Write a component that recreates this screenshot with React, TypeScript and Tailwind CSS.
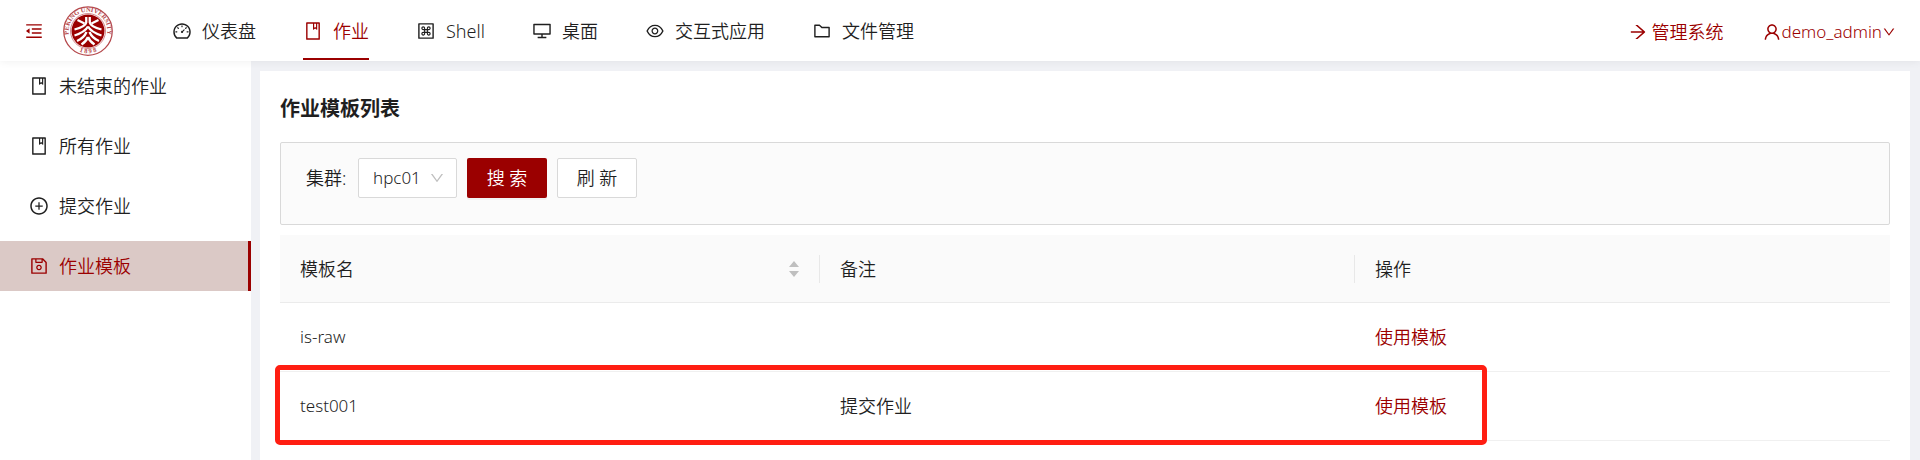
import type { ReactNode } from "react";
import type { IconType } from "react-icons";
import {
  AiOutlineArrowRight,
  AiOutlineBook,
  AiOutlineDashboard,
  AiOutlineDesktop,
  AiOutlineDown,
  AiOutlineEye,
  AiOutlineFolder,
  AiOutlineMacCommand,
  AiOutlineMenuFold,
  AiOutlinePlusCircle,
  AiOutlineSave,
  AiOutlineUser,
} from "react-icons/ai";

type Item = { label: string; icon: IconType; active?: boolean };

const navItems: Item[] = [
  { label: "仪表盘", icon: AiOutlineDashboard },
  { label: "作业", icon: AiOutlineBook, active: true },
  { label: "Shell", icon: AiOutlineMacCommand },
  { label: "桌面", icon: AiOutlineDesktop },
  { label: "交互式应用", icon: AiOutlineEye },
  { label: "文件管理", icon: AiOutlineFolder },
];

const sideItems: Item[] = [
  { label: "未结束的作业", icon: AiOutlineBook },
  { label: "所有作业", icon: AiOutlineBook },
  { label: "提交作业", icon: AiOutlinePlusCircle },
  { label: "作业模板", icon: AiOutlineSave, active: true },
];

const templates = [
  { name: "is-raw", comment: "" },
  { name: "test001", comment: "提交作业" },
];

function Logo() {
  return (
    <svg viewBox="0 0 100 100" className="size-[50px]" role="img" aria-label="Peking University">
      <defs>
        <path id="ring-top" d="M 20.400 75.800 A 39 39 0 1 1 79.600 75.800" />
        <path id="ring-bottom" d="M 20 83 A 45 45 0 0 0 80 83" />
      </defs>
      <circle cx="50" cy="50" r="48.5" fill="#fff" stroke="#b5484c" strokeWidth="2.5" />
      <g fill="#b5484c" fontFamily="Liberation Serif, serif" fontWeight="700">
        <text textAnchor="middle" fontSize="13">
          <textPath href="#ring-top" startOffset="50%">PEKING UNIVERSITY</textPath>
        </text>
        <text textAnchor="middle" fontSize="13">
          <textPath href="#ring-bottom" startOffset="50%">1 8 9 8</textPath>
        </text>
      </g>
      <circle cx="50" cy="50" r="35" fill="#fff" stroke="#c4666a" strokeWidth="1.5" />
      <circle cx="50" cy="50" r="33" fill="#9b0000" />
      <g fill="none" stroke="#fff" strokeWidth="4.6">
        <path d="M46.500 22 V33 Q45 41 23 47" />
        <path d="M53.500 22 V33 Q55 41 77 47" />
        <path d="M29 28 L43 35" />
        <path d="M71 28 L57 35" />
        <path d="M50 41 Q44 52 23 59" />
        <path d="M50 41 Q56 52 77 59" />
        <path d="M47 52 Q42 64 28 70 M53 52 Q58 64 72 70" />
        <path d="M50 62 Q47 70 37 77 M50 62 Q53 70 63 77" />
      </g>
    </svg>
  );
}

function HeadCell({ children, divider }: { children: ReactNode; divider?: boolean }) {
  return (
    <div className="flex h-[67px] items-center">
      <div className="flex flex-1 items-center justify-between px-5">{children}</div>
      {divider && <span className="h-7 w-px bg-[#e8e8e8]" />}
    </div>
  );
}

export default function App() {
  return (
    <div className="flex min-h-screen flex-col bg-[#f0f1f5] font-['Noto_Sans','Noto_Sans_CJK_SC',sans-serif] text-[18px] leading-7 font-[350] text-[#1f1f1f]">
      <header className="z-10 flex h-[61px] items-center bg-white px-6 shadow-[0_1px_8px_rgba(0,0,0,0.06)]">
        <button type="button" aria-label="收起菜单" className="mr-[19px] text-[#9b0000]">
          <AiOutlineMenuFold className="size-5" />
        </button>
        <Logo />
        <nav className="ml-[59px] flex gap-[47px] self-stretch">
          {navItems.map(({ label, icon: Icon, active }) => (
            <a
              key={label}
              href="#"
              className={
                active
                  ? "mb-px flex items-center gap-2.5 border-b-2 border-[#9b0000] pt-1 text-[#9b0000]"
                  : "mb-px flex items-center gap-2.5 border-b-2 border-transparent pt-1"
              }
            >
              <Icon className="size-5" />
              {label}
            </a>
          ))}
        </nav>
        <div className="ml-auto flex items-center gap-[38px] pt-0.5 text-[#9b0000]">
          <a href="#" className="flex items-center gap-1">
            <AiOutlineArrowRight className="size-5" />
            管理系统
          </a>
          <button type="button" className="flex items-center text-[17px]">
            <AiOutlineUser className="size-5" />
            demo_admin
            <AiOutlineDown className="size-3.5" />
          </button>
        </div>
      </header>

      <div className="flex flex-1">
        <aside className="flex w-[251px] shrink-0 flex-col gap-2.5 bg-white">
          {sideItems.map(({ label, icon: Icon, active }) => (
            <a
              key={label}
              href="#"
              className={
                active
                  ? "flex h-[50px] items-center gap-2.5 border-r-3 border-[#9b0000] bg-[#dbc9c6] pl-[29px] text-[#9b0000]"
                  : "flex h-[50px] items-center gap-2.5 pl-[29px]"
              }
            >
              <Icon className="size-5" />
              {label}
            </a>
          ))}
        </aside>

        <main className="mr-2.5 mt-2.5 ml-[9px] min-w-0 flex-1 bg-white px-5 pt-[23px]">
          <h1 className="text-[20px] leading-[30px] font-bold">作业模板列表</h1>

          <form
            className="mt-[18px] flex h-[83px] items-start gap-2.5 rounded-xs border border-[#d9d9d9] bg-[#fbfbfb] pt-[15px] pl-[25px]"
            onSubmit={(e) => e.preventDefault()}
          >
            <div className="flex items-center gap-2">
              <label htmlFor="cluster" className="w-11 whitespace-nowrap">
                集群:
              </label>
              <div className="relative">
                <select
                  id="cluster"
                  className="h-10 w-[99px] appearance-none rounded-xs border border-[#d9d9d9] bg-white pl-3.5 text-[17px]"
                >
                  <option>hpc01</option>
                </select>
                <AiOutlineDown className="pointer-events-none absolute top-3 right-3 size-4 text-[#bfbfbf]" />
              </div>
            </div>
            <button
              type="submit"
              className="h-10 w-20 rounded-xs bg-[#9b0000] text-white shadow-[0_2px_0_rgba(0,0,0,0.04)]"
            >
              搜 索
            </button>
            <button type="button" className="h-10 w-20 rounded-xs border border-[#d9d9d9] bg-white">
              刷 新
            </button>
          </form>

          <div className="relative mt-2.5">
            <table className="w-full table-fixed border-collapse text-left">
              <thead>
                <tr className="border-b border-[#ebebeb] bg-[#fafafa]">
                  <th className="w-[540px] p-0 font-[350]">
                    <HeadCell divider>
                      模板名
                      <svg viewBox="0 0 10 16" className="h-4 w-2.5" fill="#bfbfbf" aria-hidden="true">
                        <path d="M5 0 L10 6 H0 Z M0 10 H10 L5 16 Z" />
                      </svg>
                    </HeadCell>
                  </th>
                  <th className="p-0 font-[350]">
                    <HeadCell divider>备注</HeadCell>
                  </th>
                  <th className="p-0 font-[350]">
                    <HeadCell>操作</HeadCell>
                  </th>
                </tr>
              </thead>
              <tbody>
                {templates.map((t) => (
                  <tr key={t.name} className="h-[69px] border-b border-[#f0f0f0]">
                    <td className="px-5 text-[17px]">{t.name}</td>
                    <td className="px-5">{t.comment}</td>
                    <td className="px-5">
                      <a href="#" className="text-[#9b0000]">
                        使用模板
                      </a>
                    </td>
                  </tr>
                ))}
              </tbody>
            </table>
            <div className="pointer-events-none absolute top-[130px] right-[403px] -left-[5px] h-20 rounded-[5px] border-5 border-[#ff1e12]" />
          </div>
        </main>
      </div>
    </div>
  );
}
